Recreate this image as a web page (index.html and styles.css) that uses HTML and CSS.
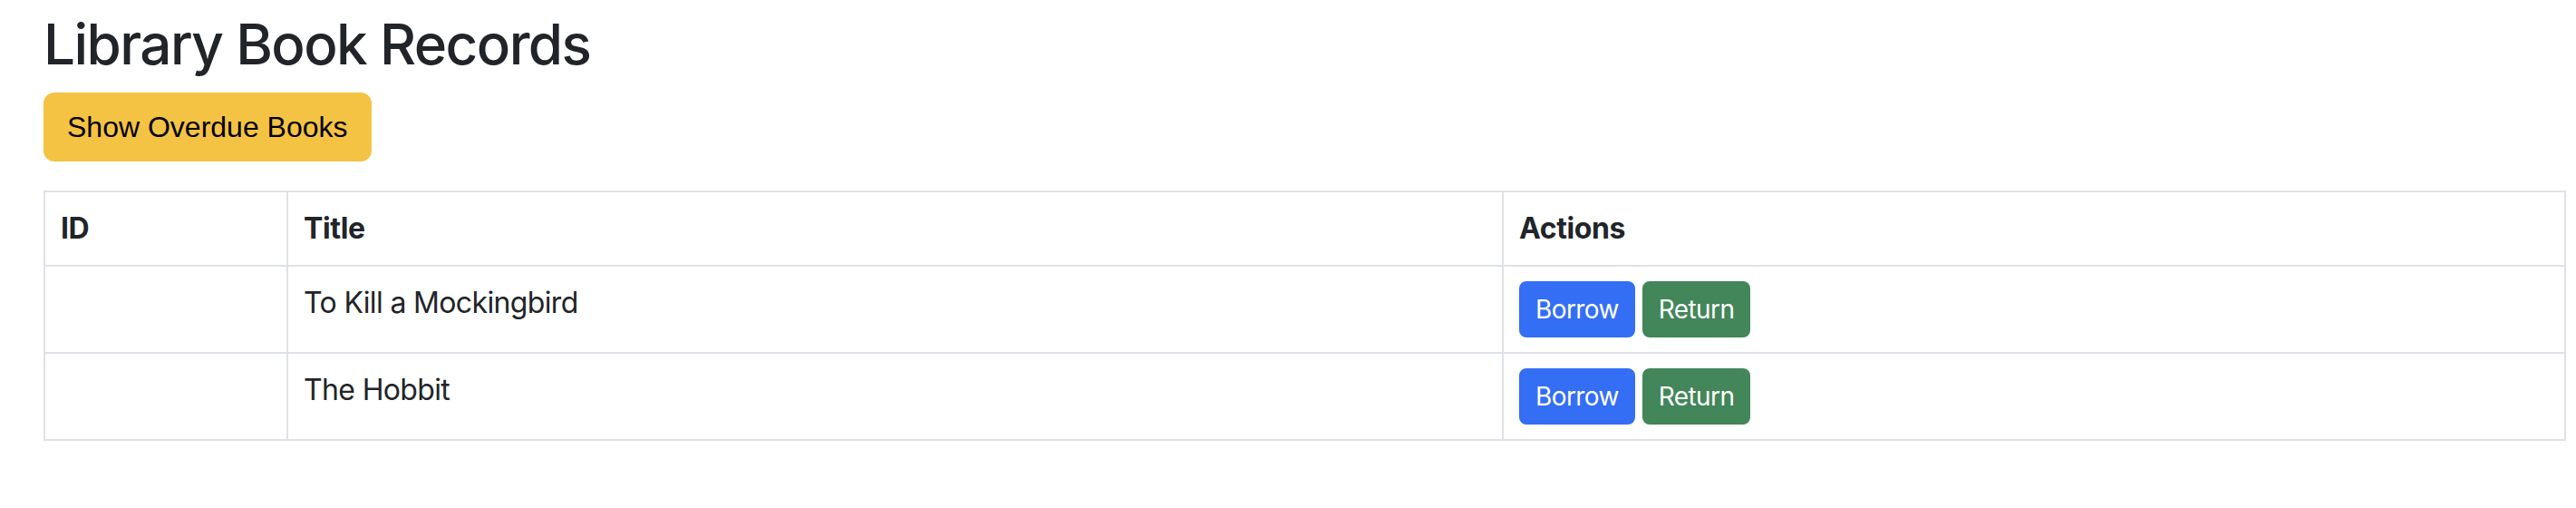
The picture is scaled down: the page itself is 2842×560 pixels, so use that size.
FILE: index.html
```html
<!DOCTYPE html>
<html lang="en">
<head>
<meta charset="utf-8">
<title>Library Book Records</title>
<link rel="stylesheet" href="styles.css">
</head>
<body>
<main class="page">
  <h1 class="page-title">Library Book Records</h1>
  <button class="btn btn-warning" type="button">Show Overdue Books</button>
  <table class="records">
    <colgroup>
      <col class="col-id">
      <col class="col-title">
      <col class="col-actions">
    </colgroup>
    <thead>
      <tr>
        <th>ID</th>
        <th>Title</th>
        <th>Actions</th>
      </tr>
    </thead>
    <tbody>
      <tr>
        <td></td>
        <td>To Kill a Mockingbird</td>
        <td class="actions"><button class="btn-sm btn-primary" type="button">Borrow</button><button class="btn-sm btn-success" type="button">Return</button></td>
      </tr>
      <tr>
        <td></td>
        <td>The Hobbit</td>
        <td class="actions"><button class="btn-sm btn-primary" type="button">Borrow</button><button class="btn-sm btn-success" type="button">Return</button></td>
      </tr>
    </tbody>
  </table>
</main>
</body>
</html>
```

FILE: styles.css
```css
html, body {
  margin: 0;
  padding: 0;
  background: #ffffff;
}

body {
  font-family: Inter, "Noto Sans", "Liberation Sans", sans-serif;
  font-size: 32px;
  line-height: 1.5;
  color: #212529;
}

.page {
  padding: 12px 11px 0 48px;
}

.page-title {
  margin: 0 0 16px 0;
  font-size: 62px;
  font-weight: 500;
  line-height: 1.2;
  letter-spacing: -1.6px;
  color: #212529;
}

.btn {
  display: inline-block;
  font-family: "Liberation Sans", Arial, sans-serif;
  font-size: 32px;
  line-height: 48px;
  padding: 12px 24px;
  border: 2px solid transparent;
  border-radius: 12px;
  cursor: pointer;
}

.btn-warning {
  background: #f5c344;
  border-color: #f5c344;
  color: #000000;
}

.records {
  margin-top: 32px;
  width: 100%;
  border-collapse: collapse;
  border: 2px solid #dee2e6;
  vertical-align: top;
}

.col-id { width: 268px; }
.col-title { width: 1341px; }

.records th,
.records td {
  border: 2px solid #dee2e6;
  padding: 16px 17px;
  text-align: left;
  vertical-align: top;
}

.records th {
  font-weight: 700;
  height: 48px;
  letter-spacing: -0.4px;
}

.records td {
  height: 62px;
  letter-spacing: -0.65px;
}

.btn-sm {
  display: inline-block;
  vertical-align: top;
  font-family: Inter, "Noto Sans", sans-serif;
  font-size: 28px;
  line-height: 42px;
  padding: 8px 16px;
  border: 2px solid transparent;
  border-radius: 8px;
  color: #ffffff;
  margin-right: 8px;
  letter-spacing: -0.6px;
  cursor: pointer;
}

.btn-primary {
  background: #336ef5;
  border-color: #336ef5;
}

.btn-success {
  background: #42865a;
  border-color: #42865a;
}
```
